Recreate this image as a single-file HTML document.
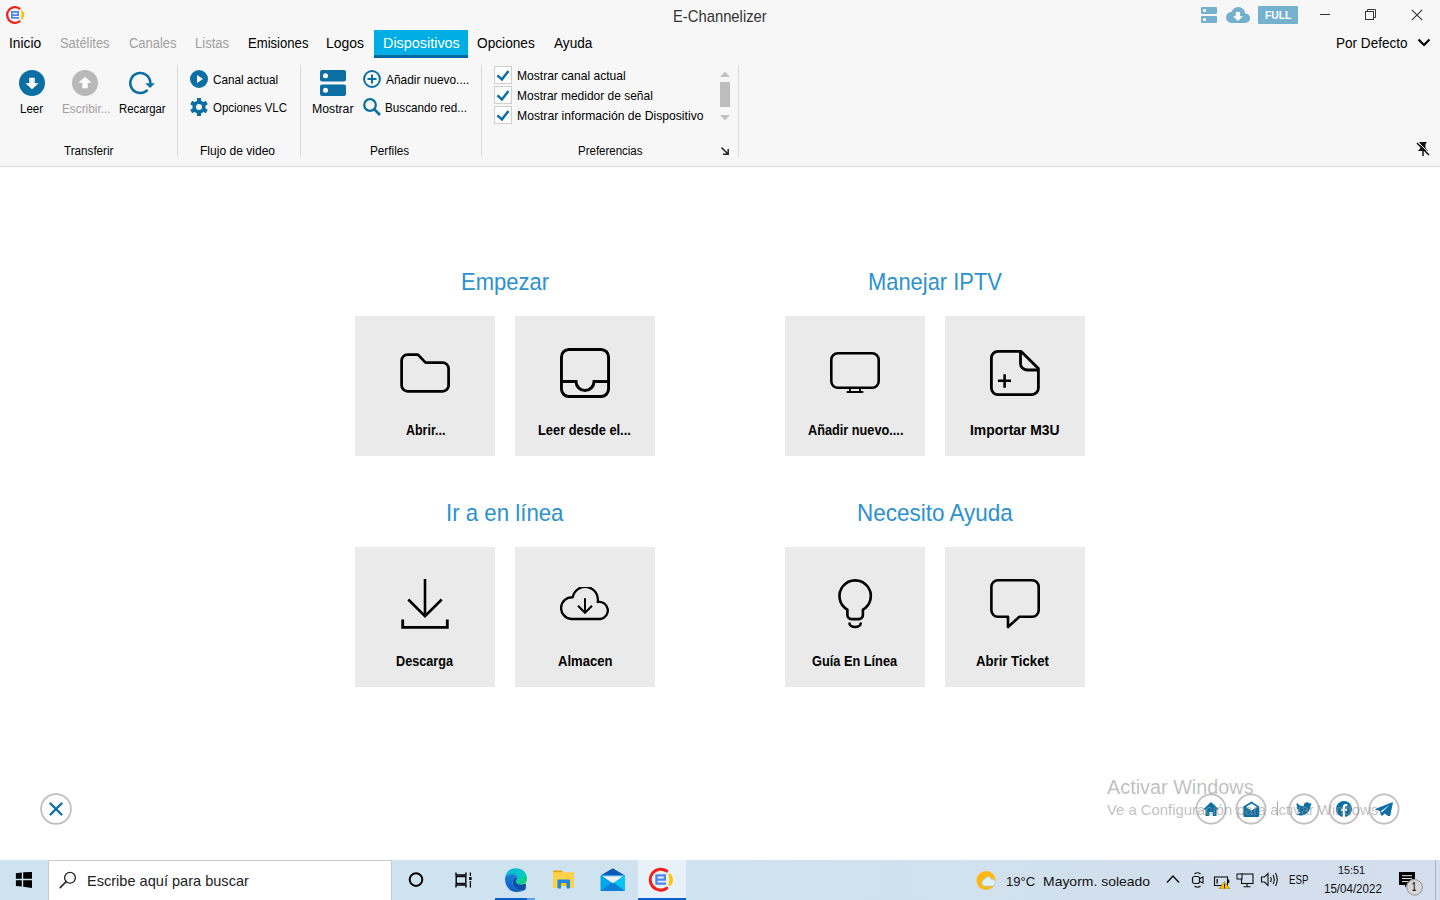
<!DOCTYPE html><html><head><meta charset="utf-8"><style>
html,body{margin:0;padding:0;width:1440px;height:900px;overflow:hidden;background:#fff;}
body{position:relative;font-family:"Liberation Sans",sans-serif;}
.t{position:absolute;white-space:nowrap;line-height:1;transform-origin:0 0;}
.r{position:absolute;}
</style></head><body><div class="r" style="left:0px;top:0px;width:1440px;height:166px;background:#f7f7f7;"></div><div class="r" style="left:0px;top:166px;width:1440px;height:1px;background:#dadada;"></div><div class="r" style="left:1130px;top:167px;width:1px;height:2px;background:#e0e0e0;"></div><svg class="r" style="left:1px;top:1px" width="28.00" height="28.00" viewBox="0 0 28 28"><path d="M18.5 7.57 A7.85 7.85 0 1 0 18.5 20.43" fill="none" stroke="#f0211a" stroke-width="2.3" stroke-linecap="round"/><path d="M19.8 8.8 Q23.4 10.5 23.1 14 Q23.4 17.5 19.8 19.2 Q21.2 14 19.8 8.8 Z" fill="#fec200"/><path d="M10 10 H18 V14.9 H11.7 V16.1 H18 V17.8 H10 Z M11.7 11.7 V13.2 H16.3 V11.7 Z" fill="#4c84f0" fill-rule="evenodd"/></svg><span class="t" style="left:673.22px;top:9.00px;font-size:15.99px;color:#333;transform:scaleX(0.9252);">E-Channelizer</span><svg class="r" style="left:1201px;top:7px" width="16" height="16" viewBox="0 0 16 16"><rect x="0" y="0" width="16" height="7" rx="1" fill="#74b1cf"/><rect x="0" y="9" width="16" height="7" rx="1" fill="#74b1cf"/><circle cx="3.5" cy="3.5" r="1.6" fill="#fff"/><circle cx="3.5" cy="12.5" r="1.6" fill="#fff"/></svg><svg class="r" style="left:1226px;top:7px" width="24" height="16" viewBox="0 0 24 16"><g fill="#74b1cf"><circle cx="5.6" cy="10.4" r="5.6"/><circle cx="12.3" cy="7" r="7"/><circle cx="19.3" cy="11.2" r="4.8"/><rect x="5.6" y="9" width="13.7" height="7"/></g><path d="M9.8 5 H14 V9.3 H16.9 L11.9 14 L6.9 9.3 H9.8 Z" fill="#fff"/></svg><div class="r" style="left:1258px;top:6px;width:40px;height:18px;background:#74b1cf;border-radius:1px;"></div><span class="t" style="left:1264.73px;top:9.00px;font-size:11.63px;color:#fff;font-weight:bold;transform:scaleX(0.8880);">FULL</span><div class="r" style="left:1320px;top:14px;width:10px;height:1px;background:#333;"></div><svg class="r" style="left:1364px;top:8px" width="13" height="13" viewBox="0 0 13 13"><rect x="1.5" y="3.5" width="8" height="8" fill="none" stroke="#333"/><path d="M3.5 3.5 V1.5 H11.5 V9.5 H9.5" fill="none" stroke="#333"/></svg><svg class="r" style="left:1411px;top:9px" width="12" height="12" viewBox="0 0 12 12"><path d="M0.8 0.8 L11.2 11.2 M11.2 0.8 L0.8 11.2" stroke="#333" stroke-width="1.1"/></svg><span class="t" style="left:8.76px;top:36.00px;font-size:14.53px;color:#000;transform:scaleX(0.9485);">Inicio</span><span class="t" style="left:59.82px;top:36.00px;font-size:14.53px;color:#a0a0a0;transform:scaleX(0.8905);">Satélites</span><span class="t" style="left:128.55px;top:36.00px;font-size:14.53px;color:#a0a0a0;transform:scaleX(0.8924);">Canales</span><span class="t" style="left:194.95px;top:36.00px;font-size:14.53px;color:#a0a0a0;transform:scaleX(0.8989);">Listas</span><span class="t" style="left:247.70px;top:36.00px;font-size:14.53px;color:#000;transform:scaleX(0.9028);">Emisiones</span><span class="t" style="left:326.38px;top:36.00px;font-size:14.53px;color:#000;transform:scaleX(0.9621);">Logos</span><span class="t" style="left:477.38px;top:36.00px;font-size:14.53px;color:#000;transform:scaleX(0.9428);">Opciones</span><span class="t" style="left:553.93px;top:36.00px;font-size:14.53px;color:#000;transform:scaleX(0.9377);">Ayuda</span><div class="r" style="left:374px;top:30px;width:94px;height:28px;background:#00aee6;"></div><div class="r" style="left:374px;top:55px;width:94px;height:3px;background:#0068a0;"></div><span class="t" style="left:382.60px;top:36.00px;font-size:14.53px;color:#fff;transform:scaleX(0.9918);">Dispositivos</span><span class="t" style="left:1336.41px;top:37.00px;font-size:13.81px;color:#000;transform:scaleX(0.9825);">Por Defecto</span><svg class="r" style="left:1417px;top:38px" width="14" height="9" viewBox="0 0 14 9"><path d="M1.5 1.5 L7 7 L12.5 1.5" fill="none" stroke="#000" stroke-width="2.2"/></svg><svg class="r" style="left:19px;top:70px" width="26" height="26" viewBox="0 0 26 26"><circle cx="13" cy="13" r="13" fill="#0b6fa4"/><path d="M10.3 7.7 H15.7 V13.2 H19.6 L13 19.2 L6.4 13.2 H10.3 Z" fill="#fff"/></svg><span class="t" style="left:20.08px;top:102.00px;font-size:13.08px;color:#000;transform:scaleX(0.8828);">Leer</span><svg class="r" style="left:72px;top:70px" width="26" height="26" viewBox="0 0 26 26"><circle cx="13" cy="13" r="13" fill="#b9b9b9"/><path d="M10.3 18.3 H15.7 V12.8 H19.6 L13 6.8 L6.4 12.8 H10.3 Z" fill="#fff"/></svg><span class="t" style="left:61.56px;top:102.00px;font-size:13.08px;color:#a0a0a0;transform:scaleX(0.9022);">Escribir...</span><svg class="r" style="left:128px;top:70px" width="28" height="26" viewBox="0 0 28 26"><path d="M18.7 20.7 A10 10 0 1 1 22.3 12.6" fill="none" stroke="#0b6fa4" stroke-width="2.6" stroke-linecap="round"/><path d="M17.2 13.2 H26.9 L22.1 17.9 Z" fill="#0b6fa4"/></svg><span class="t" style="left:118.59px;top:102.00px;font-size:13.08px;color:#000;transform:scaleX(0.8663);">Recargar</span><span class="t" style="left:63.71px;top:144.00px;font-size:13.08px;color:#000;transform:scaleX(0.8919);">Transferir</span><div class="r" style="left:177px;top:65px;width:1px;height:92px;background:#dcdcdc;"></div><svg class="r" style="left:190px;top:70px" width="18" height="18" viewBox="0 0 18 18"><circle cx="9" cy="9" r="9" fill="#0b6fa4"/><path d="M7 5 L13 9 L7 13 Z" fill="#fff"/></svg><span class="t" style="left:213.31px;top:74.00px;font-size:12.35px;color:#000;transform:scaleX(0.9493);">Canal actual</span><svg class="r" style="left:190px;top:98px" width="18" height="18" viewBox="0 0 18 18"><rect x="7" y="0" width="4" height="18" fill="#0b6fa4" transform="rotate(0 9 9)"/><rect x="7" y="0" width="4" height="18" fill="#0b6fa4" transform="rotate(60 9 9)"/><rect x="7" y="0" width="4" height="18" fill="#0b6fa4" transform="rotate(120 9 9)"/><circle cx="9" cy="9" r="6.6" fill="#0b6fa4"/><circle cx="9" cy="9" r="3" fill="#f7f7f7"/></svg><span class="t" style="left:213.48px;top:102.00px;font-size:12.35px;color:#000;transform:scaleX(0.9290);">Opciones VLC</span><span class="t" style="left:200.04px;top:144.00px;font-size:13.08px;color:#000;transform:scaleX(0.9216);">Flujo de video</span><div class="r" style="left:300px;top:65px;width:1px;height:92px;background:#dcdcdc;"></div><svg class="r" style="left:319.5px;top:70px" width="26" height="26" viewBox="0 0 26 26"><rect x="0" y="0" width="26" height="11.5" rx="2" fill="#0b6fa4"/><rect x="0" y="14.5" width="26" height="11.5" rx="2" fill="#0b6fa4"/><circle cx="5.5" cy="5.75" r="2.5" fill="#fff"/><circle cx="5.5" cy="20.25" r="2.5" fill="#fff"/></svg><span class="t" style="left:311.52px;top:102.00px;font-size:13.08px;color:#000;transform:scaleX(0.9364);">Mostrar</span><svg class="r" style="left:363px;top:70px" width="18" height="18" viewBox="0 0 18 18"><circle cx="9" cy="9" r="7.9" fill="none" stroke="#0b6fa4" stroke-width="2"/><path d="M9 4.5 V13.5 M4.5 9 H13.5" stroke="#0b6fa4" stroke-width="2"/></svg><span class="t" style="left:386.34px;top:74.00px;font-size:12.35px;color:#000;transform:scaleX(0.9636);">Añadir nuevo....</span><svg class="r" style="left:363px;top:98px" width="18" height="18" viewBox="0 0 18 18"><circle cx="7" cy="7" r="5.8" fill="none" stroke="#0b6fa4" stroke-width="2.2"/><path d="M11 11 L17 17" stroke="#0b6fa4" stroke-width="2.6"/></svg><span class="t" style="left:385.46px;top:102.00px;font-size:12.35px;color:#000;transform:scaleX(0.9493);">Buscando red...</span><span class="t" style="left:370.06px;top:144.00px;font-size:13.08px;color:#000;transform:scaleX(0.8974);">Perfiles</span><div class="r" style="left:481px;top:65px;width:1px;height:92px;background:#dcdcdc;"></div><div class="r" style="left:494px;top:66px;width:18px;height:18px;background:#fff;box-sizing:border-box;border:1px solid #cfcfcf;"></div><svg class="r" style="left:494px;top:66px" width="18" height="18" viewBox="0 0 18 18"><path d="M3.4 9.4 L7.9 13.4 L14.5 5" fill="none" stroke="#0b6fa4" stroke-width="2.5"/></svg><span class="t" style="left:517.43px;top:70.00px;font-size:12.35px;color:#000;transform:scaleX(0.9781);">Mostrar canal actual</span><div class="r" style="left:494px;top:86px;width:18px;height:18px;background:#fff;box-sizing:border-box;border:1px solid #cfcfcf;"></div><svg class="r" style="left:494px;top:86px" width="18" height="18" viewBox="0 0 18 18"><path d="M3.4 9.4 L7.9 13.4 L14.5 5" fill="none" stroke="#0b6fa4" stroke-width="2.5"/></svg><span class="t" style="left:517.44px;top:90.00px;font-size:12.35px;color:#000;transform:scaleX(0.9707);">Mostrar medidor de señal</span><div class="r" style="left:494px;top:106px;width:18px;height:18px;background:#fff;box-sizing:border-box;border:1px solid #cfcfcf;"></div><svg class="r" style="left:494px;top:106px" width="18" height="18" viewBox="0 0 18 18"><path d="M3.4 9.4 L7.9 13.4 L14.5 5" fill="none" stroke="#0b6fa4" stroke-width="2.5"/></svg><span class="t" style="left:517.43px;top:110.00px;font-size:12.35px;color:#000;transform:scaleX(0.9849);">Mostrar información de Dispositivo</span><svg class="r" style="left:719px;top:70px" width="12" height="8" viewBox="0 0 12 8"><path d="M1 7 L6 1.5 L11 7 Z" fill="#c2c2c2"/></svg><div class="r" style="left:720px;top:82px;width:10px;height:25px;background:#bdbdbd;"></div><svg class="r" style="left:719px;top:114px" width="12" height="8" viewBox="0 0 12 8"><path d="M1 1 L6 6.5 L11 1 Z" fill="#c2c2c2"/></svg><span class="t" style="left:577.58px;top:144.00px;font-size:13.08px;color:#000;transform:scaleX(0.8784);">Preferencias</span><svg class="r" style="left:720px;top:146px" width="10" height="10" viewBox="0 0 10 10"><path d="M1.5 1.5 L8 8 M3 8.2 H8.2 V3" fill="none" stroke="#222" stroke-width="1.5"/></svg><div class="r" style="left:738px;top:65px;width:1px;height:92px;background:#dcdcdc;"></div><svg class="r" style="left:1415px;top:141px" width="16" height="16" viewBox="0 0 16 16"><path d="M4 1 H12 L10.5 3 V7 L13 10 H3 L5.5 7 V3 Z" fill="#111"/><path d="M8 10 V15" stroke="#111" stroke-width="1.5"/><path d="M2 2 L14 14" stroke="#111" stroke-width="1.5"/><path d="M3 1 L15 13" stroke="#f7f7f7" stroke-width="1"/></svg><div class="r" style="left:0px;top:167px;width:1440px;height:693px;background:#fff;"></div><span class="t" style="left:460.84px;top:270.00px;font-size:24.71px;color:#2b91d0;transform:scaleX(0.8902);font-weight:normal;">Empezar</span><div class="r" style="left:355px;top:316px;width:140px;height:140px;background:#eaeaea;"></div><div class="r" style="left:515px;top:316px;width:140px;height:140px;background:#eaeaea;"></div><div class="r" style="left:785px;top:316px;width:140px;height:140px;background:#eaeaea;"></div><div class="r" style="left:945px;top:316px;width:140px;height:140px;background:#eaeaea;"></div><div class="r" style="left:355px;top:547px;width:140px;height:140px;background:#eaeaea;"></div><div class="r" style="left:515px;top:547px;width:140px;height:140px;background:#eaeaea;"></div><div class="r" style="left:785px;top:547px;width:140px;height:140px;background:#eaeaea;"></div><div class="r" style="left:945px;top:547px;width:140px;height:140px;background:#eaeaea;"></div><span class="t" style="left:868.15px;top:270.00px;font-size:24.71px;color:#2b91d0;transform:scaleX(0.8867);">Manejar IPTV</span><span class="t" style="left:445.70px;top:501.00px;font-size:24.71px;color:#2b91d0;transform:scaleX(0.9006);">Ir a en línea</span><span class="t" style="left:856.90px;top:501.00px;font-size:24.71px;color:#2b91d0;transform:scaleX(0.9098);">Necesito Ayuda</span><span class="t" style="left:405.99px;top:423.00px;font-size:14.53px;color:#000;font-weight:bold;transform:scaleX(0.8569);">Abrir...</span><span class="t" style="left:538.41px;top:423.00px;font-size:14.53px;color:#000;font-weight:bold;transform:scaleX(0.8848);">Leer desde el...</span><span class="t" style="left:808.08px;top:423.00px;font-size:14.53px;color:#000;font-weight:bold;transform:scaleX(0.8765);">Añadir nuevo....</span><span class="t" style="left:969.59px;top:423.00px;font-size:14.53px;color:#000;font-weight:bold;transform:scaleX(0.9580);">Importar M3U</span><span class="t" style="left:395.93px;top:654.00px;font-size:14.53px;color:#000;font-weight:bold;transform:scaleX(0.8716);">Descarga</span><span class="t" style="left:557.92px;top:654.00px;font-size:14.53px;color:#000;font-weight:bold;transform:scaleX(0.9011);">Almacen</span><span class="t" style="left:811.99px;top:654.00px;font-size:14.53px;color:#000;font-weight:bold;transform:scaleX(0.8789);">Guía En Línea</span><span class="t" style="left:976.17px;top:654.00px;font-size:14.53px;color:#000;font-weight:bold;transform:scaleX(0.9057);">Abrir Ticket</span><svg class="r" style="left:399px;top:352px" width="52" height="42" viewBox="0 0 52 42"><path d="M2.6 8.6 A6 6 0 0 1 8.6 2.6 H18.9 L26.6 10.6 H43.6 A6 6 0 0 1 49.6 16.6 V33.3 A6 6 0 0 1 43.6 39.3 H8.6 A6 6 0 0 1 2.6 33.3 Z" fill="none" stroke="#000" stroke-width="2.75" stroke-linejoin="round"/></svg><svg class="r" style="left:560px;top:348px" width="50" height="50" viewBox="0 0 50 50"><rect x="1.45" y="1.45" width="47.1" height="47.1" rx="7.5" fill="none" stroke="#000" stroke-width="2.9"/><path d="M1.45 33.5 H16 A9 9 0 0 0 34 33.5 H48.55" fill="none" stroke="#000" stroke-width="2.9"/></svg><svg class="r" style="left:830px;top:352px" width="50" height="42" viewBox="0 0 50 42"><rect x="1.3" y="1.3" width="47.4" height="34.4" rx="6.5" fill="none" stroke="#000" stroke-width="2.6"/><path d="M20 36 V39.5 M30 36 V39.5" fill="none" stroke="#000" stroke-width="1.8"/><path d="M17.6 40 H32.4" fill="none" stroke="#000" stroke-width="2.2" stroke-linecap="round"/></svg><svg class="r" style="left:990px;top:350px" width="50" height="46" viewBox="0 0 50 46"><path d="M31.2 1.4 H8 A6.6 6.6 0 0 0 1.4 8 V38 A6.6 6.6 0 0 0 8 44.6 H42 A6.6 6.6 0 0 0 48.4 38 V18.6 Z" fill="none" stroke="#000" stroke-width="2.8" stroke-linejoin="round"/><path d="M30.5 1.4 V13.5 A6.5 6.5 0 0 0 37 20 H48.4" fill="none" stroke="#000" stroke-width="2.8"/><path d="M7.9 30.8 H21 M14.6 24.3 V37.7" fill="none" stroke="#000" stroke-width="2.5"/></svg><svg class="r" style="left:400px;top:578px" width="50" height="52" viewBox="0 0 50 52"><path d="M25 1 V37.5" fill="none" stroke="#000" stroke-width="2.6"/><path d="M8.3 21.5 L25 38.2 L41.7 21.5" fill="none" stroke="#000" stroke-width="2.6"/><path d="M2.7 43 V49.3 H47.3 V43" fill="none" stroke="#000" stroke-width="2.8" stroke-linecap="square"/></svg><svg class="r" style="left:560px;top:587px" width="50" height="35" viewBox="0 0 50 35"><path d="M11.3 32 A10.8 10.8 0 1 1 12.7 10.3 A12.7 12.7 0 0 1 37.7 15 A8.5 8.5 0 1 1 40.7 32 Z" fill="none" stroke="#000" stroke-width="2.3" stroke-linejoin="round"/><path d="M25 11.3 V26" fill="none" stroke="#000" stroke-width="2"/><path d="M18 18.8 L25 25.8 L32 18.8" fill="none" stroke="#000" stroke-width="2"/></svg><svg class="r" style="left:836px;top:577px" width="38" height="54" viewBox="0 0 38 54"><path d="M11.4 32.7 A15.7 15.7 0 1 1 26.9 32.7 V38 A4 4 0 0 1 22.9 42.1 H15.4 A4 4 0 0 1 11.4 38 Z" fill="none" stroke="#000" stroke-width="2.6" stroke-linejoin="round"/><path d="M13.5 46.5 A5.6 3.4 0 0 0 24.7 46.5" fill="none" stroke="#000" stroke-width="2.5" stroke-linecap="round"/></svg><svg class="r" style="left:989px;top:578px" width="52" height="52" viewBox="0 0 52 52"><path d="M8.9 2.3 H43.2 A6.5 6.5 0 0 1 49.7 8.8 V32.2 A6.5 6.5 0 0 1 43.2 38.7 H30.4 L19 49 V38.7 H8.9 A6.5 6.5 0 0 1 2.4 32.2 V8.8 A6.5 6.5 0 0 1 8.9 2.3 Z" fill="none" stroke="#000" stroke-width="2.6" stroke-linejoin="round"/></svg><svg class="r" style="left:38px;top:791px" width="36" height="36" viewBox="0 0 36 36"><circle cx="18" cy="18" r="14.9" fill="none" stroke="#bdbdbd" stroke-width="1.7"/><path d="M12.5 12.5 L23.5 23.5 M23.5 12.5 L12.5 23.5" stroke="#0b6fa4" stroke-width="2.4" stroke-linecap="round"/></svg><svg class="r" style="left:1193px;top:791px" width="36" height="36" viewBox="0 0 36 36"><circle cx="18" cy="18" r="14.6" fill="none" stroke="#c0c0c0" stroke-width="1.8"/></svg><svg class="r" style="left:1233px;top:791px" width="36" height="36" viewBox="0 0 36 36"><circle cx="18" cy="18" r="14.6" fill="none" stroke="#c0c0c0" stroke-width="1.8"/></svg><svg class="r" style="left:1286px;top:791px" width="36" height="36" viewBox="0 0 36 36"><circle cx="18" cy="18" r="14.6" fill="none" stroke="#c0c0c0" stroke-width="1.8"/></svg><svg class="r" style="left:1326px;top:791px" width="36" height="36" viewBox="0 0 36 36"><circle cx="18" cy="18" r="14.6" fill="none" stroke="#c0c0c0" stroke-width="1.8"/></svg><svg class="r" style="left:1366px;top:791px" width="36" height="36" viewBox="0 0 36 36"><circle cx="18" cy="18" r="14.6" fill="none" stroke="#c0c0c0" stroke-width="1.8"/></svg><svg class="r" style="left:1203px;top:802px" width="16" height="14" viewBox="0 0 16 14"><path d="M8 0 L16 7.5 H13.5 V14 H9.6 V10 H6.4 V14 H2.5 V7.5 H0 Z" fill="#0b6fa4"/></svg><svg class="r" style="left:1243px;top:801px" width="17" height="16" viewBox="0 0 17 16"><path d="M8.5 0.5 L16.2 5.5 V14.5 A1.5 1.5 0 0 1 14.7 16 H1.8 A1.5 1.5 0 0 1 0.3 14.5 V5.5 Z" fill="#0b6fa4"/><path d="M3 6 L8.5 2.5 L14 6 L8.5 9.5 Z" fill="#fff"/></svg><svg class="r" style="left:1296px;top:802px" width="16" height="14" viewBox="0 0 16 14"><path d="M15.8 1.8 C15.2 2.1 14.6 2.3 14 2.3 C14.7 1.9 15.1 1.3 15.4 0.6 C14.8 1 14.1 1.2 13.4 1.4 C12.8 0.7 11.9 0.3 11 0.3 C9.2 0.3 7.7 1.8 7.7 3.6 C7.7 3.9 7.7 4.1 7.8 4.3 C5.1 4.2 2.6 2.9 1 0.9 C0.7 1.4 0.5 2 0.5 2.6 C0.5 3.7 1.1 4.7 2 5.3 C1.5 5.3 1 5.1 0.5 4.9 C0.5 6.5 1.7 7.8 3.2 8.1 C2.7 8.3 2.1 8.3 1.7 8.2 C2.1 9.5 3.3 10.5 4.8 10.5 C3.6 11.4 2.2 12 0.7 12 C0.5 12 0.2 12 0 12 C1.5 12.9 3.2 13.5 5.1 13.5 C11.1 13.5 14.4 8.5 14.4 4.1 L14.4 3.7 C15 3.2 15.5 2.5 15.8 1.8 Z" fill="#0b6fa4"/></svg><svg class="r" style="left:1336px;top:801px" width="16" height="16" viewBox="0 0 16 16"><circle cx="8" cy="8" r="8" fill="#0b6fa4"/><path d="M9 16 V10 H11 L11.3 7.7 H9 V6.3 C9 5.7 9.2 5.2 10.1 5.2 H11.4 V3.2 C11.1 3.2 10.4 3.1 9.6 3.1 C7.9 3.1 6.8 4.1 6.8 6 V7.7 H4.9 V10 H6.8 V16 Z" fill="#fff"/></svg><svg class="r" style="left:1375px;top:802px" width="18" height="14" viewBox="0 0 18 14"><path d="M17.3 0.3 L0.8 6.8 C0.3 7 0.3 7.5 0.8 7.7 L4.8 8.9 L6.4 13.4 C6.6 13.9 7.1 14 7.4 13.7 L9.7 11.5 L14 14.7 C14.4 15 15 14.8 15.1 14.3 L17.9 1 C18 0.5 17.7 0.1 17.3 0.3 Z" fill="#0b6fa4"/><path d="M5.6 9.2 L14.5 3 L7.2 10.2 Z" fill="#fff" opacity="0.9"/></svg><div class="r" style="left:1277px;top:801px;width:1px;height:15px;background:#b0b0b0;"></div><span class="t" style="left:1106.70px;top:778.00px;font-size:19.77px;color:rgba(150,150,150,0.6);transform:scaleX(1.0035);">Activar Windows</span><span class="t" style="left:1106.73px;top:802.00px;font-size:15.12px;color:rgba(150,150,150,0.6);transform:scaleX(0.9814);">Ve a Configuración para activar Windows.</span><div class="r" style="left:0px;top:860px;width:1440px;height:40px;background:linear-gradient(90deg,#cde3ef 0%,#cfe2ef 50%,#d4deec 100%);"></div><svg class="r" style="left:15px;top:871px" width="18" height="18" viewBox="0 0 18 18"><path d="M0.9 2.2 L6.8 1.5 V7.8 H0.9 Z M8.2 1.3 L17 0.9 V7.8 H8.2 Z M0.9 9.2 H6.8 V15.6 L0.9 15 Z M8.2 9.2 H17 V16.9 L8.2 15.8 Z" fill="#000"/></svg><div class="r" style="left:48px;top:860px;width:344px;height:40px;background:#fff;box-sizing:border-box;border:1px solid #c9c9c9;border-bottom:none;"></div><svg class="r" style="left:59px;top:871px" width="18" height="18" viewBox="0 0 18 18"><circle cx="11" cy="6.8" r="5.4" fill="none" stroke="#222" stroke-width="1.3"/><path d="M7.2 10.6 L1.2 16.6" stroke="#222" stroke-width="1.5" stroke-linecap="round"/></svg><span class="t" style="left:87.13px;top:873.00px;font-size:15.55px;color:#222;transform:scaleX(0.9365);">Escribe aquí para buscar</span><svg class="r" style="left:406px;top:870px" width="20" height="20" viewBox="0 0 20 20"><circle cx="10" cy="9.6" r="6.3" fill="none" stroke="#000" stroke-width="2"/></svg><svg class="r" style="left:454px;top:870px" width="20" height="20" viewBox="0 0 20 20"><path d="M2 2.5 V5 H12 V2.5 M2 17.5 V15 H12 V17.5" fill="none" stroke="#000" stroke-width="1.4"/><rect x="2.2" y="6.5" width="9.6" height="7" fill="none" stroke="#000" stroke-width="1.4"/><path d="M16.4 2.5 V6 M16.4 11 V17.5" stroke="#000" stroke-width="1.3"/><rect x="15.2" y="7" width="2.4" height="3" fill="#000"/></svg><svg class="r" style="left:502px;top:867px" width="26" height="26" viewBox="0 0 26 26"><defs><linearGradient id="eg1" x1="0" y1="0" x2="1" y2="1"><stop offset="0" stop-color="#0fb1e8"/><stop offset="0.6" stop-color="#00c9c0"/><stop offset="1" stop-color="#12d94a"/></linearGradient><linearGradient id="eg2" x1="0" y1="0" x2="0" y2="1"><stop offset="0" stop-color="#1a7fd8"/><stop offset="1" stop-color="#0a5cc0"/></linearGradient></defs><path d="M3 12 C3 5 8 1.2 13.5 1.2 C20.5 1.2 25 6 25 11.5 C25 15.5 22 17.5 18.5 17.5 C15.8 17.5 14 16.5 14 14.5 C14 12.5 15.5 11.5 15.5 10.5 C15.5 8.5 13 7 10 7 C6 7 3 9 3 12 Z" fill="url(#eg1)"/><path d="M3 12 C3 9 6 7 10 7 C13 7 15.5 8.5 15.5 10.5 C12.5 9.8 10.5 12.5 10.5 15.5 C10.5 20 14.5 23.5 19 23.5 C21 23.5 22.5 23 23.5 22.5 C21.5 24.2 18 25 14.5 25 C8 25 3 19.5 3 12 Z" fill="url(#eg2)"/><path d="M10.5 15.5 C10.5 12.5 12.5 9.8 15.5 10.5 C15.5 11.5 14 12.5 14 14.5 C14 16.5 15.8 17.5 18.5 17.5 C20.5 17.5 22.5 17 24 16.5 C24 20 23.5 22.5 23.5 22.5 C22.5 23 21 23.5 19 23.5 C14.5 23.5 10.5 20 10.5 15.5 Z" fill="#0b4fa8"/></svg><div class="r" style="left:495px;top:898px;width:32px;height:2px;background:#0a5fc8;"></div><div class="r" style="left:527px;top:898px;width:8px;height:2px;background:#5ba3e3;"></div><svg class="r" style="left:553px;top:870px" width="22" height="20" viewBox="0 0 22 20"><path d="M0 1.5 A1 1 0 0 1 1 0.5 H8.5 L10 2 V3.5 H0 Z" fill="#e8a200"/><rect x="0" y="2.2" width="21" height="15.8" fill="#ffd14a"/><rect x="4.5" y="9.5" width="12.5" height="9" rx="0.8" fill="#1e88e0"/><rect x="8" y="13" width="5.5" height="3" fill="#ffc800"/><rect x="8" y="16" width="5.5" height="3" fill="#cfe2ef"/></svg><svg class="r" style="left:600px;top:868px" width="26" height="24" viewBox="0 0 26 24"><path d="M0.5 7.5 L12.8 0.2 L25 7.5 Z" fill="#0a5bb5"/><rect x="0.5" y="7.5" width="24.5" height="15.5" fill="#00a6ec"/><path d="M0.5 23 L12.8 13.8 L25 23 Z" fill="#0c7fd5"/><path d="M25 7.5 V23 L12.8 13.8 Z" fill="#03c6f2"/><path d="M2.5 8.3 H23 L12.8 15.2 Z" fill="#f2f2f2"/></svg><div class="r" style="left:638px;top:860px;width:48px;height:40px;background:#e9f1f8;"></div><div class="r" style="left:638px;top:898px;width:48px;height:2px;background:#0a64d0;"></div><svg class="r" style="left:642.3px;top:861.3px" width="37.33" height="37.33" viewBox="0 0 28 28"><path d="M18.5 7.57 A7.85 7.85 0 1 0 18.5 20.43" fill="none" stroke="#f0211a" stroke-width="2.3" stroke-linecap="round"/><path d="M19.8 8.8 Q23.4 10.5 23.1 14 Q23.4 17.5 19.8 19.2 Q21.2 14 19.8 8.8 Z" fill="#fec200"/><path d="M10 10 H18 V14.9 H11.7 V16.1 H18 V17.8 H10 Z M11.7 11.7 V13.2 H16.3 V11.7 Z" fill="#4c84f0" fill-rule="evenodd"/></svg><svg class="r" style="left:976px;top:870px" width="22" height="21" viewBox="0 0 22 21"><circle cx="10" cy="10.5" r="9.5" fill="#fdb813"/><path d="M9 9 C10 6 14 6 15 9 C18 9 19.5 11 19 13 C19 15 17 16 15.5 16 H9 C7 16 6 14.5 6 13 C6 11 7.5 9.5 9 9 Z" fill="#dff1fb" stroke="#9fd0ee" stroke-width="0.6"/></svg><span class="t" style="left:1006.02px;top:875.00px;font-size:13.37px;color:#111;transform:scaleX(0.9759);">19°C</span><span class="t" style="left:1043.38px;top:875.00px;font-size:13.37px;color:#111;transform:scaleX(1.0450);">Mayorm. soleado</span><svg class="r" style="left:1166px;top:874px" width="14" height="10" viewBox="0 0 14 10"><path d="M1 8.5 L7 2 L13 8.5" fill="none" stroke="#111" stroke-width="1.5"/></svg><svg class="r" style="left:1191px;top:871px" width="13" height="18" viewBox="0 0 13 18"><path d="M3.5 3 Q6.5 0.5 9.5 3 M3.5 15 Q6.5 17.5 9.5 15" fill="none" stroke="#111" stroke-width="1.1"/><rect x="1.5" y="5.5" width="7" height="7" rx="2" fill="none" stroke="#111" stroke-width="1.2"/><path d="M9 7.5 L12 6 V12 L9 10.5" fill="none" stroke="#111" stroke-width="1.1"/></svg><svg class="r" style="left:1213px;top:875px" width="18" height="14" viewBox="0 0 18 14"><rect x="1.5" y="2" width="13" height="8.5" fill="none" stroke="#111" stroke-width="1.1"/><rect x="14.5" y="4.5" width="1.8" height="3.5" fill="#111"/><rect x="3.5" y="4" width="1.3" height="4.5" fill="#111"/><path d="M11.5 6.5 L17 13.8 H6 Z" fill="#f7c300" stroke="#6b5500" stroke-width="0.4"/><rect x="11" y="8.8" width="1" height="2.8" fill="#111"/><rect x="11" y="12.2" width="1" height="1" fill="#111"/></svg><svg class="r" style="left:1236px;top:873px" width="18" height="15" viewBox="0 0 18 15"><rect x="5.5" y="1" width="11.5" height="9.5" fill="none" stroke="#111" stroke-width="1.1"/><rect x="1" y="1" width="5" height="5" fill="#cfdcec" stroke="#111" stroke-width="1"/><path d="M11 10.5 V13.5 M7.5 13.8 H14.5" stroke="#111" stroke-width="1.1"/></svg><svg class="r" style="left:1260px;top:872px" width="18" height="15" viewBox="0 0 18 15"><path d="M1.5 5 H4.5 L8 1.5 V13.5 L4.5 10 H1.5 Z" fill="none" stroke="#111" stroke-width="1.1"/><path d="M10.5 5 Q12 7.5 10.5 10 M13 3 Q15.5 7.5 13 12 M15.5 1 Q19 7.5 15.5 14" fill="none" stroke="#111" stroke-width="1.1"/></svg><span class="t" style="left:1288.63px;top:875.00px;font-size:11.92px;color:#111;transform:scaleX(0.8121);">ESP</span><span class="t" style="left:1337.79px;top:865.00px;font-size:11.19px;color:#111;transform:scaleX(0.9669);">15:51</span><span class="t" style="left:1323.53px;top:882.00px;font-size:13.08px;color:#111;transform:scaleX(0.8835);">15/04/2022</span><svg class="r" style="left:1397px;top:870px" width="28" height="28" viewBox="0 0 28 28"><path d="M2 2 H18 V15 H10 L8 17.5 V15 H2 Z" fill="#000"/><path d="M5 5.7 H15 M5 8.6 H15 M5 11.6 H11" stroke="#e8ecf4" stroke-width="1"/><circle cx="17.6" cy="17.4" r="8.5" fill="#d4deec"/><circle cx="17.6" cy="17.4" r="7.8" fill="#d6d6d6" stroke="#8a8a8a" stroke-width="0.9"/></svg><span class="t" style="left:1412.12px;top:881.00px;font-size:12.50px;color:#222;font-weight:bold;transform:scaleX(0.5849);">1</span><div class="r" style="left:1435px;top:860px;width:1px;height:40px;background:#a8b4c0;"></div></body></html>
